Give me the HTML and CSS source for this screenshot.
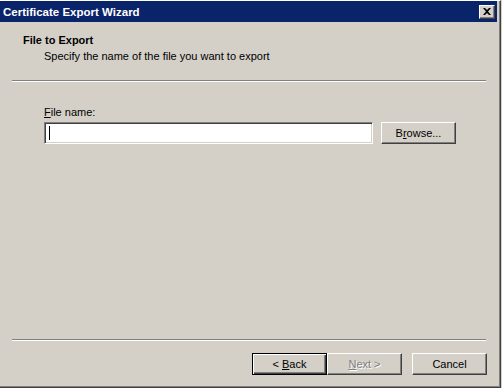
FILE: index.html
```html
<!DOCTYPE html>
<html lang="en">
<head>
    <meta charset="UTF-8">
    <meta name="viewport" content="width=device-width, initial-scale=1.0">
    <title>Certificate Export Wizard</title>
    <link rel="stylesheet" href="styles.css">
</head>
<body>

    <div class="window">
        <div class="titlebar">
            <span class="title">Certificate Export Wizard</span>
            <button class="close-btn" title="Close">
                <svg width="8" height="7" viewBox="0 0 8 7">
                    <path d="M0 0h2l2 2 2-2h2L5 3.5 8 7H6L4 5 2 7H0l3-3.5z" fill="#000"/>
                </svg>
            </button>
        </div>

        <div class="header">
            <div class="header-title">File to Export</div>
            <div class="header-sub">Specify the name of the file you want to export</div>
        </div>
        <div class="separator"></div>

        <div class="content">
            <label class="field-label" for="fileName"><u>F</u>ile name:</label>
            <div class="field-row">
                <div class="textbox" id="fileName"><span class="caret"></span></div>
                <button class="btn"><span>B<u>r</u>owse...</span></button>
            </div>
        </div>

        <div class="footer">
            <div class="separator"></div>
            <div class="buttons">
                <button class="btn default"><span>&lt; <u>B</u>ack</span></button>
                <button class="btn disabled"><span><u>N</u>ext &gt;</span></button>
                <button class="btn cancel"><span>Cancel</span></button>
            </div>
        </div>
    </div>

</body>
</html>
```

FILE: styles.css
```css
body {
    margin: 0;
    font-family: "Liberation Sans", Arial, sans-serif;
    font-size: 11px;
    background: #d4d0c8;
}

.window {
    width: 500px;
    height: 386px;
    display: flex;
    flex-direction: column;
    background: #d4d0c8;
    border-top: 1px solid #ffffff;
    border-right: 1px solid #404040;
    border-bottom: 1px solid #404040;
    box-shadow: inset -1px -1px #808080;
}

.titlebar {
    height: 21px;
    margin-right: 3px;
    background: #0a246a;
    color: #ffffff;
    display: flex;
    align-items: center;
    justify-content: space-between;
    padding-left: 3px;
    padding-right: 2px;
}

.title {
    font-weight: bold;
    font-size: 11.5px;
}

.close-btn {
    width: 16px;
    height: 14px;
    padding: 0;
    margin: 0;
    display: flex;
    align-items: center;
    justify-content: center;
    background: #d4d0c8;
    border: 1px solid;
    border-color: #ffffff #404040 #404040 #ffffff;
    box-shadow: inset -1px -1px #808080;
}

.header {
    padding: 11px 0 0 23px;
    line-height: 14px;
}

.header-title {
    font-weight: bold;
}

.header-sub {
    padding-left: 21px;
    margin-top: 2px;
}

.separator {
    border-top: 1px solid #808080;
    border-bottom: 1px solid #ffffff;
    height: 0;
    margin: 17px 14px 0 12px;
}

.content {
    flex: 1;
    padding: 23px 0 0 44px;
}

.field-label {
    display: block;
    line-height: 14px;
}

.field-row {
    display: flex;
    gap: 8px;
    margin-top: 3px;
}

.textbox {
    box-sizing: border-box;
    width: 329px;
    height: 22px;
    background: #ffffff;
    border: 1px solid;
    border-color: #808080 #ffffff #ffffff #808080;
    box-shadow: inset 1px 1px #404040, inset -1px -1px #d4d0c8;
    padding: 3px 0 0 4px;
}

.caret {
    display: block;
    width: 1px;
    height: 14px;
    background: #000000;
}

.btn {
    box-sizing: border-box;
    width: 75px;
    height: 22px;
    padding: 0;
    font-family: inherit;
    font-size: 11px;
    color: #000000;
    background: #d4d0c8;
    border: 1px solid;
    border-color: #ffffff #404040 #404040 #ffffff;
    box-shadow: inset -1px -1px #808080;
}

.btn.default {
    border: 1px solid #000000;
    box-shadow: inset 1px 1px #ffffff, inset -1px -1px #404040, inset -2px -2px #808080;
}

.btn.disabled {
    color: #808080;
    text-shadow: 1px 1px #ffffff;
}

.footer .separator {
    margin-top: 0;
}

.buttons {
    display: flex;
    justify-content: flex-end;
    padding: 12px 13px 12px 0;
}

.btn.cancel {
    margin-left: 10px;
}
```
